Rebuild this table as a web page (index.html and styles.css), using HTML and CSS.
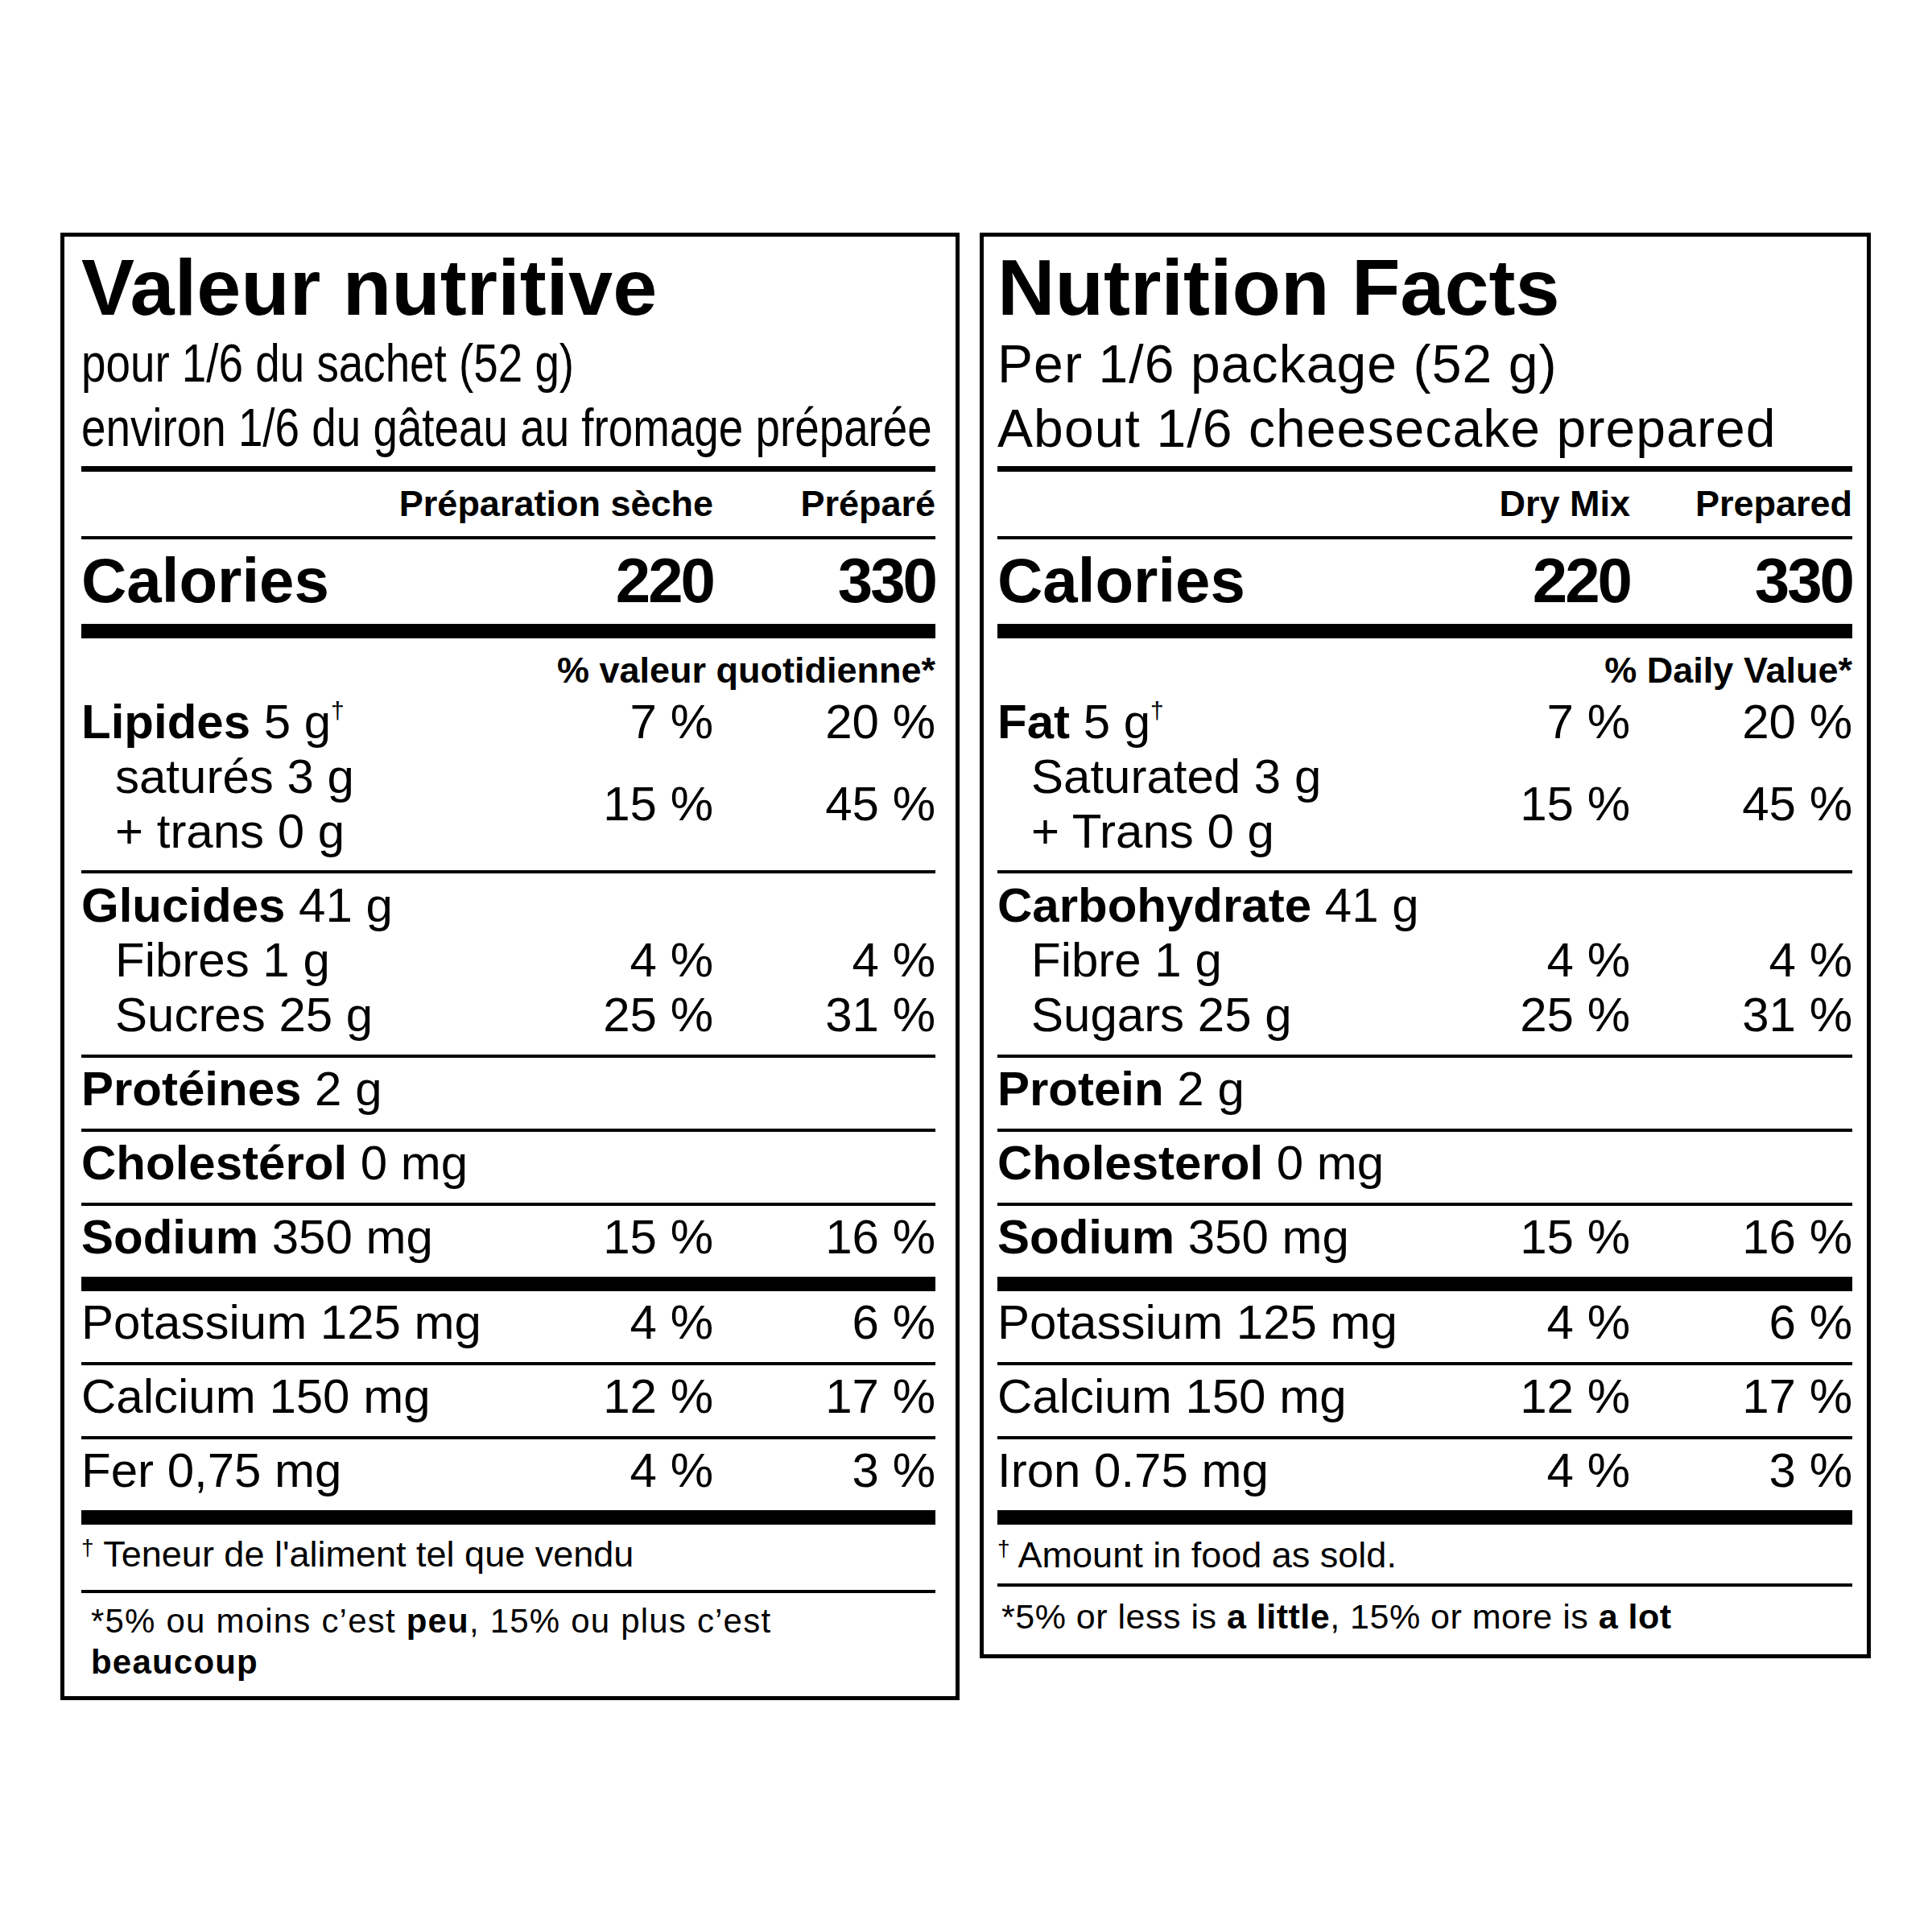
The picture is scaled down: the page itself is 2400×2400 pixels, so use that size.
FILE: index.html
```html
<!DOCTYPE html>
<html lang="fr">
<head>
<meta charset="utf-8">
<title>Valeur nutritive / Nutrition Facts</title>
<link rel="stylesheet" href="styles.css">
</head>
<body>
<div class="page">
  <section class="panel panel-fr" lang="fr">
    <h1 class="title">Valeur nutritive</h1>
    <div class="serving serving-fr">
      <div>pour 1/6 du sachet (52 g)</div>
      <div>environ 1/6 du gâteau au fromage préparée</div>
    </div>
    <div class="rule rule-med"></div>
    <div class="row hdr"><span class="lbl"></span><span class="v1">Préparation sèche</span><span class="v2">Préparé</span></div>
    <div class="rule"></div>
    <div class="row cal"><span class="lbl">Calories</span><span class="v1">220</span><span class="v2">330</span></div>
    <div class="rule rule-thick"></div>
    <div class="dv">% valeur quotidienne*</div>
    <div class="group group-fat">
      <div class="row"><span class="lbl"><b>Lipides</b> 5 g<sup>†</sup></span><span class="v1">7 %</span><span class="v2">20 %</span></div>
      <div class="row"><span class="lbl sub">saturés 3 g<br>+ trans 0 g</span><span class="v1">15 %</span><span class="v2">45 %</span></div>
    </div>
    <div class="rule"></div>
    <div class="group group-carb">
      <div class="row"><span class="lbl"><b>Glucides</b> 41 g</span></div>
      <div class="row"><span class="lbl sub">Fibres 1 g</span><span class="v1">4 %</span><span class="v2">4 %</span></div>
      <div class="row"><span class="lbl sub">Sucres 25 g</span><span class="v1">25 %</span><span class="v2">31 %</span></div>
    </div>
    <div class="rule"></div>
    <div class="row item"><span class="lbl"><b>Protéines</b> 2 g</span></div>
    <div class="rule"></div>
    <div class="row item"><span class="lbl"><b>Cholestérol</b> 0 mg</span></div>
    <div class="rule"></div>
    <div class="row item"><span class="lbl"><b>Sodium</b> 350 mg</span><span class="v1">15 %</span><span class="v2">16 %</span></div>
    <div class="rule rule-thick"></div>
    <div class="row item"><span class="lbl">Potassium 125 mg</span><span class="v1">4 %</span><span class="v2">6 %</span></div>
    <div class="rule"></div>
    <div class="row item"><span class="lbl">Calcium 150 mg</span><span class="v1">12 %</span><span class="v2">17 %</span></div>
    <div class="rule"></div>
    <div class="row item"><span class="lbl">Fer 0,75 mg</span><span class="v1">4 %</span><span class="v2">3 %</span></div>
    <div class="rule rule-thick"></div>
    <div class="fn1"><sup>†</sup> Teneur de l'aliment tel que vendu</div>
    <div class="rule"></div>
    <div class="fn2">*5% ou moins c’est <b>peu</b>, 15% ou plus c’est<br><b>beaucoup</b></div>
  </section>

  <section class="panel panel-en" lang="en">
    <h1 class="title">Nutrition Facts</h1>
    <div class="serving serving-en">
      <div>Per 1/6 package (52 g)</div>
      <div>About 1/6 cheesecake prepared</div>
    </div>
    <div class="rule rule-med"></div>
    <div class="row hdr"><span class="lbl"></span><span class="v1">Dry Mix</span><span class="v2">Prepared</span></div>
    <div class="rule"></div>
    <div class="row cal"><span class="lbl">Calories</span><span class="v1">220</span><span class="v2">330</span></div>
    <div class="rule rule-thick"></div>
    <div class="dv">% Daily Value*</div>
    <div class="group group-fat">
      <div class="row"><span class="lbl"><b>Fat</b> 5 g<sup>†</sup></span><span class="v1">7 %</span><span class="v2">20 %</span></div>
      <div class="row"><span class="lbl sub">Saturated 3 g<br>+ Trans 0 g</span><span class="v1">15 %</span><span class="v2">45 %</span></div>
    </div>
    <div class="rule"></div>
    <div class="group group-carb">
      <div class="row"><span class="lbl"><b>Carbohydrate</b> 41 g</span></div>
      <div class="row"><span class="lbl sub">Fibre 1 g</span><span class="v1">4 %</span><span class="v2">4 %</span></div>
      <div class="row"><span class="lbl sub">Sugars 25 g</span><span class="v1">25 %</span><span class="v2">31 %</span></div>
    </div>
    <div class="rule"></div>
    <div class="row item"><span class="lbl"><b>Protein</b> 2 g</span></div>
    <div class="rule"></div>
    <div class="row item"><span class="lbl"><b>Cholesterol</b> 0 mg</span></div>
    <div class="rule"></div>
    <div class="row item"><span class="lbl"><b>Sodium</b> 350 mg</span><span class="v1">15 %</span><span class="v2">16 %</span></div>
    <div class="rule rule-thick"></div>
    <div class="row item"><span class="lbl">Potassium 125 mg</span><span class="v1">4 %</span><span class="v2">6 %</span></div>
    <div class="rule"></div>
    <div class="row item"><span class="lbl">Calcium 150 mg</span><span class="v1">12 %</span><span class="v2">17 %</span></div>
    <div class="rule"></div>
    <div class="row item"><span class="lbl">Iron 0.75 mg</span><span class="v1">4 %</span><span class="v2">3 %</span></div>
    <div class="rule rule-thick"></div>
    <div class="fn1"><sup>†</sup> Amount in food as sold.</div>
    <div class="rule"></div>
    <div class="fn2">*5% or less is <b>a little</b>, 15% or more is <b>a lot</b></div>
  </section>
</div>
</body>
</html>
```

FILE: styles.css
```css
html, body {
  margin: 0;
  padding: 0;
  background: #fff;
}

body {
  color: #000;
  font-family: "Liberation Sans", Arial, Helvetica, sans-serif;
}

.page {
  display: flex;
  align-items: flex-start;
  gap: 25px;
  padding: 289px 0 0 75px;
}

.panel {
  box-sizing: border-box;
  border: 5px solid #000;
}

.panel-fr {
  width: 1117px;
  padding: 0 25px 17px 21px;
}

.panel-en {
  width: 1107px;
  padding: 0 18px 21px 17px;
}

.title {
  margin: 0;
  padding-top: 13px;
  font-size: 99px;
  font-weight: 700;
  line-height: 100px;
  white-space: nowrap;
}

.serving {
  white-space: nowrap;
  line-height: 80px;
}

.serving-fr {
  margin-top: 4px;
  font-size: 66px;
}

.serving-fr div {
  transform: scaleX(0.83);
  transform-origin: left center;
}

.serving-en {
  margin-top: 5px;
  font-size: 66px;
  letter-spacing: 1.1px;
}

.rule {
  height: 4px;
  background: #000;
}

.rule-med {
  height: 7px;
  margin-top: 8px;
}

.panel-en .rule-med {
  margin-top: 7px;
}

.rule-thick {
  height: 18px;
}

.row {
  display: flex;
  align-items: center;
}

.lbl {
  flex: 1 1 auto;
  min-width: 0;
  white-space: nowrap;
}

.v1 {
  flex: none;
  min-width: 220px;
  text-align: right;
  white-space: nowrap;
}

.v2 {
  flex: none;
  width: 276px;
  text-align: right;
  white-space: nowrap;
}

.hdr {
  height: 80px;
  line-height: 80px;
  font-size: 45px;
  font-weight: 700;
}

.cal {
  font-size: 78px;
  font-weight: 700;
  line-height: 102px;
  padding-bottom: 3px;
}

.cal .v1,
.cal .v2 {
  letter-spacing: -3px;
}

.dv {
  height: 70px;
  line-height: 80px;
  font-size: 45px;
  font-weight: 700;
  text-align: right;
  white-space: nowrap;
}

.group,
.item {
  font-size: 60px;
  line-height: 68px;
}

.group-fat {
  padding-bottom: 14px;
}

.group-carb {
  padding: 6px 0 15px;
}

.item {
  padding: 5px 0 15px;
}

.sub {
  padding-left: 42px;
}

b {
  font-weight: 700;
}

sup {
  font-size: 30px;
  line-height: 0;
  vertical-align: 24px;
}

.fn1 {
  font-size: 45px;
  line-height: 50px;
  padding: 12px 0 19px;
  white-space: nowrap;
}

.fn1 sup {
  font-size: 28px;
  vertical-align: 14px;
}

.panel-en .fn1 {
  padding: 13px 0 10px;
}

.fn2 {
  font-size: 42px;
  line-height: 51px;
  letter-spacing: 1.2px;
  padding: 9px 0 0 12px;
  white-space: nowrap;
}

.panel-en .fn2 {
  font-size: 43px;
  letter-spacing: 0.5px;
  padding: 12px 0 0 5px;
}
```
